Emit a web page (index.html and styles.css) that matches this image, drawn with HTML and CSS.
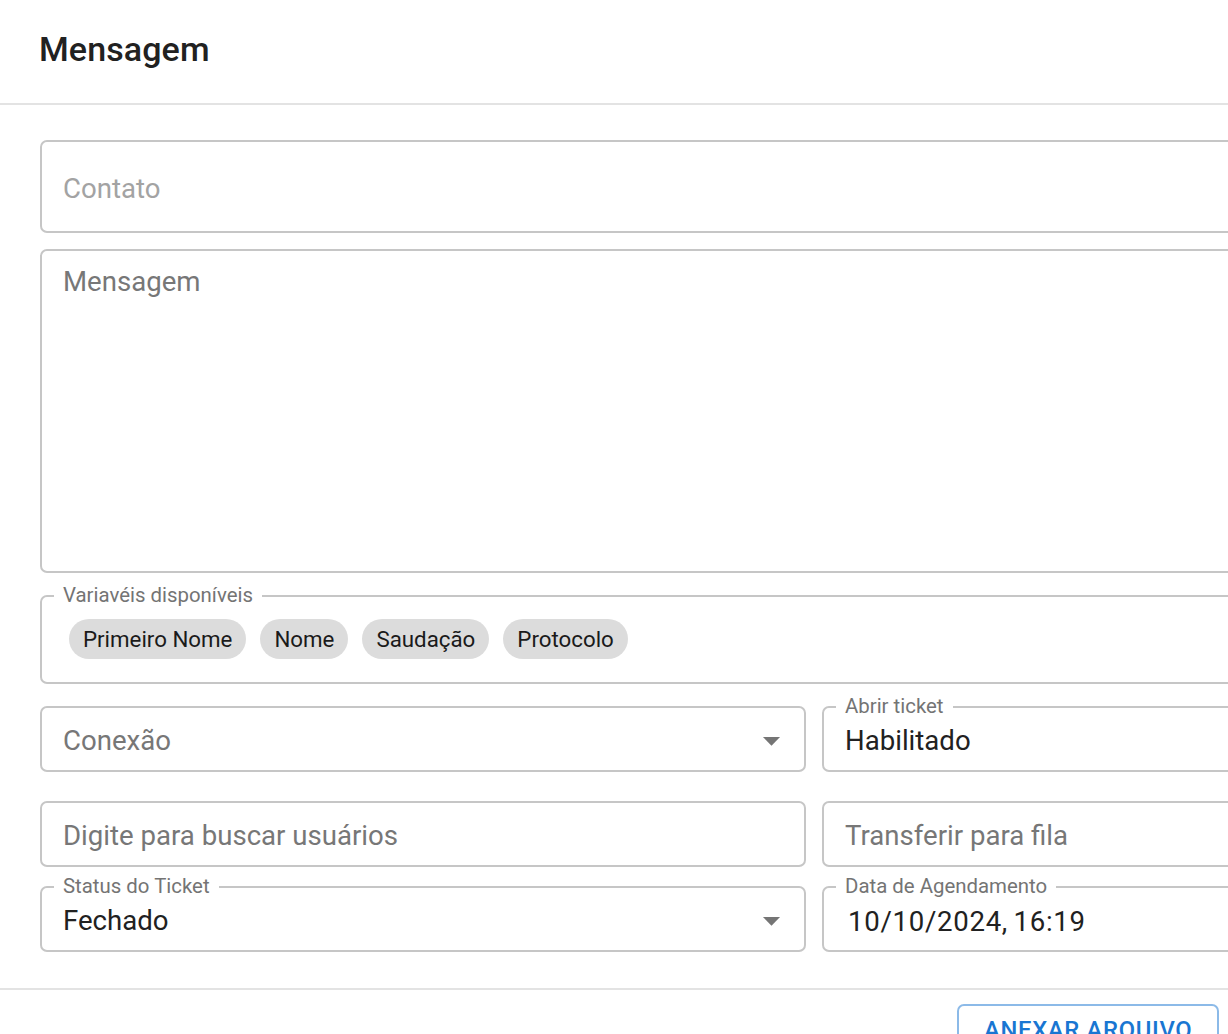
FILE: index.html
```html
<!DOCTYPE html>
<html lang="pt-BR">
<head>
<meta charset="utf-8">
<title>Mensagem</title>
<link rel="stylesheet" href="styles.css">
</head>
<body>
<div class="dialog">
  <h2 class="dialog-title">Mensagem</h2>
  <div class="dialog-content">
    <div class="field field-tall">
      <span class="placeholder placeholder-light">Contato</span>
    </div>
    <div class="field field-area">
      <span class="placeholder">Mensagem</span>
    </div>
    <div class="field field-vars">
      <span class="field-label">Variavéis disponíveis</span>
      <div class="chips">
        <span class="chip">Primeiro Nome</span>
        <span class="chip">Nome</span>
        <span class="chip">Saudação</span>
        <span class="chip">Protocolo</span>
      </div>
    </div>
    <div class="row row-1">
      <div class="field field-small">
        <span class="placeholder">Conexão</span>
        <svg class="arrow" viewBox="0 0 24 24"><path d="M7 10l5 5 5-5z"/></svg>
      </div>
      <div class="field field-small">
        <span class="field-label">Abrir ticket</span>
        <span class="value">Habilitado</span>
      </div>
    </div>
    <div class="row row-2">
      <div class="field field-small">
        <span class="placeholder">Digite para buscar usuários</span>
      </div>
      <div class="field field-small">
        <span class="placeholder">Transferir para fila</span>
      </div>
    </div>
    <div class="row row-3">
      <div class="field field-small">
        <span class="field-label">Status do Ticket</span>
        <span class="value">Fechado</span>
        <svg class="arrow" viewBox="0 0 24 24"><path d="M7 10l5 5 5-5z"/></svg>
      </div>
      <div class="field field-small">
        <span class="field-label">Data de Agendamento</span>
        <span class="value value-date">10/10/2024, 16:19</span>
      </div>
    </div>
  </div>
  <div class="dialog-actions">
    <button class="btn-outlined" type="button">Anexar arquivo</button>
  </div>
</div>
</body>
</html>
```

FILE: styles.css
```css
html, body {
  margin: 0;
  padding: 0;
  overflow: hidden;
  background: #ffffff;
}

body {
  font-family: Roboto, "Liberation Sans", Arial, sans-serif;
  color: rgba(0, 0, 0, 0.87);
}

.dialog {
  width: 1628px;
  background: #ffffff;
}

.dialog-title {
  margin: 0;
  height: 105px;
  box-sizing: border-box;
  padding: 29px 0 0 39px;
  font-size: 34px;
  line-height: 40px;
  font-weight: 500;
  color: #212121;
  border-bottom: 2px solid #e3e3e3;
  letter-spacing: 0.1px;
}

.dialog-content {
  padding: 35px 40px 0 40px;
  display: flex;
  flex-direction: column;
}

.field {
  position: relative;
  box-sizing: border-box;
  border: 2px solid #c6c6c6;
  border-radius: 7px;
  display: flex;
  align-items: center;
  padding-left: 21px;
  font-size: 27.6px;
}

.field-tall {
  height: 93px;
  padding-top: 3px;
}

.field-area {
  margin-top: 16px;
  height: 324px;
  align-items: flex-start;
  padding-top: 11px;
  line-height: 40px;
}

.field-vars {
  margin-top: 22px;
  height: 89px;
  align-items: flex-start;
  padding: 22px 0 0 27px;
}

.placeholder {
  color: #777777;
}

.placeholder-light {
  color: #a3a3a3;
}

.value {
  color: #212121;
}

.value-date {
  letter-spacing: 0.7px;
  word-spacing: -2px;
  padding-left: 3px;
  padding-top: 3px;
}

.field-label {
  position: absolute;
  top: -14px;
  left: 12px;
  padding: 0 9px;
  background: #ffffff;
  font-size: 20.4px;
  line-height: 24px;
  color: #747474;
}

.chips {
  display: flex;
  gap: 14px;
}

.chip {
  display: inline-flex;
  align-items: center;
  height: 40px;
  padding: 0 14px;
  border-radius: 20px;
  background: #dcdcdc;
  font-size: 22.3px;
  color: #1a1a1a;
}

.row {
  display: flex;
  gap: 16px;
}

.row > .field {
  flex: 1 1 0;
}

.row-1 { margin-top: 22px; }
.row-2 { margin-top: 29px; }
.row-3 { margin-top: 19px; }

.field-small {
  height: 66px;
  padding-top: 2px;
}

.arrow {
  position: absolute;
  right: 12px;
  top: 50%;
  width: 41px;
  height: 41px;
  margin-top: -19px;
  fill: #757575;
}

.dialog-actions {
  margin-top: 36px;
  border-top: 2px solid #e3e3e3;
  padding: 14px 0 0 957px;
  display: flex;
}

.btn-outlined {
  box-sizing: border-box;
  height: 62px;
  padding: 4px 25px 0 25px;
  border: 2px solid rgba(25, 118, 210, 0.5);
  border-radius: 7px;
  background: #ffffff;
  color: #1976d2;
  font-family: Roboto, "Liberation Sans", Arial, sans-serif;
  font-size: 23.8px;
  font-weight: 500;
  text-transform: uppercase;
  letter-spacing: 0.68px;
  white-space: nowrap;
  display: flex;
  align-items: flex-start;
  justify-content: center;
  line-height: 40px;
}
```
